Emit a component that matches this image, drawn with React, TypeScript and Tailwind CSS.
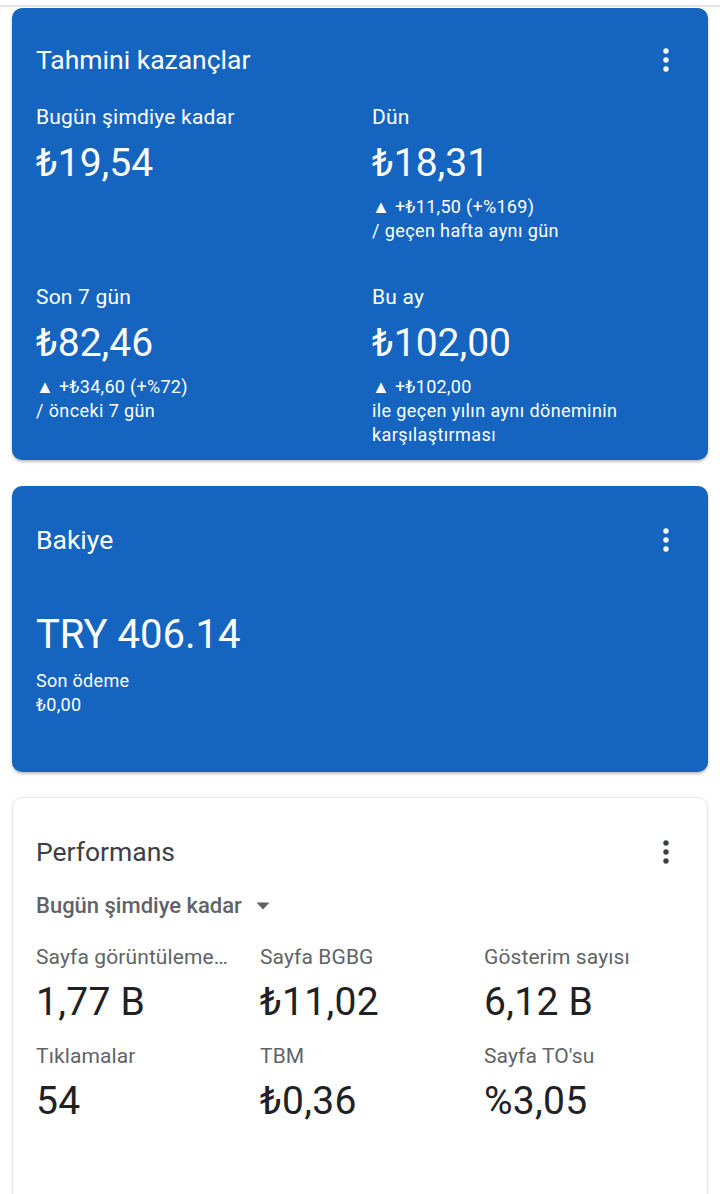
import React from "react";

const Dots = ({ color }: { color: string }) => (
  <svg width="6" height="24" viewBox="0 0 6 24" className="shrink-0">
    <circle cx="3" cy="3" r="2.7" fill={color} />
    <circle cx="3" cy="12" r="2.7" fill={color} />
    <circle cx="3" cy="21" r="2.7" fill={color} />
  </svg>
);

const font = { fontFamily: "Roboto, 'Noto Sans', sans-serif" };

function Stat({ label, value, delta, sub }: { label: string; value: string; delta?: string; sub?: string[] }) {
  return (
    <div className="flex flex-col">
      <div className="text-[21px] leading-[28px] tracking-[0.2px]">{label}</div>
      <div className="text-[39px] leading-[48px] mt-[8px]">{value}</div>
      {delta && <div className="text-[18px] leading-[24px] mt-[8px] tracking-[0.3px]">▲ {delta}</div>}
      {sub && sub.map((s) => (
        <div key={s} className="text-[18px] leading-[24.5px] tracking-[0.4px]">{s}</div>
      ))}
    </div>
  );
}

export default function App() {
  return (
    <div className="w-[720px] h-[1194px] overflow-hidden bg-white" style={font}>
      <div className="h-[5px] bg-white" />
      <div className="h-[2px] bg-[#e3e3e3]" />
      <div className="h-[1px] bg-white" />
      <div className="px-[12px] flex flex-col">
        {/* Card 1 */}
        <div className="bg-[#1565c0] rounded-[10px] text-white shadow-[0_2px_3px_rgba(0,0,0,0.25)] h-[452px] pl-[24px] pr-[39px] pt-[32px]">
          <div className="flex items-center justify-between h-[40px]">
            <div className="text-[26.5px] leading-[32px]">Tahmini kazançlar</div>
            <Dots color="#ffffff" />
          </div>
          <div className="grid grid-cols-[336px_1fr] mt-[23px]">
            <Stat label="Bugün şimdiye kadar" value="₺19,54" />
            <Stat label="Dün" value="₺18,31" delta="+₺11,50 (+%169)" sub={["/ geçen hafta aynı gün"]} />
          </div>
          <div className="grid grid-cols-[336px_1fr] mt-[39px]">
            <Stat label="Son 7 gün" value="₺82,46" delta="+₺34,60 (+%72)" sub={["/ önceki 7 gün"]} />
            <Stat label="Bu ay" value="₺102,00" delta="+₺102,00" sub={["ile geçen yılın aynı döneminin", "karşılaştırması"]} />
          </div>
        </div>

        {/* Card 2 */}
        <div className="mt-[26px] bg-[#1565c0] rounded-[10px] text-white shadow-[0_2px_3px_rgba(0,0,0,0.25)] h-[286px] pl-[24px] pr-[39px] pt-[34px]">
          <div className="flex items-center justify-between h-[40px]">
            <div className="text-[26.5px] leading-[32px]">Bakiye</div>
            <Dots color="#ffffff" />
          </div>
          <div className="text-[40px] leading-[48px] mt-[51px]">TRY 406.14</div>
          <div className="text-[18px] leading-[24px] mt-[10px] tracking-[0.3px]">Son ödeme</div>
          <div className="text-[18px] leading-[24px] tracking-[0.3px]">₺0,00</div>
        </div>

        {/* Card 3 */}
        <div className="mt-[25px] bg-white rounded-[10px] border border-[#e8e8e8] shadow-[0_1px_3px_rgba(0,0,0,0.10)] h-[420px] pl-[23px] pr-[38px] pt-[34px]">
          <div className="flex items-center justify-between h-[40px]">
            <div className="text-[26.5px] leading-[32px] text-[#3c4043]">Performans</div>
            <Dots color="#3c4043" />
          </div>
          <div className="flex items-center gap-[14px] mt-[20px] text-[#5f6368]">
            <span className="text-[22px] leading-[28px] font-medium">Bugün şimdiye kadar</span>
            <svg width="14" height="8" viewBox="0 0 14 8">
              <path d="M0.5 0.5h13L7 7.5z" fill="#5f6368" />
            </svg>
          </div>
          <div className="grid grid-cols-[224px_224px_224px] mt-[23px] gap-y-[16px]">
            {[
              ["Sayfa görüntüleme…", "1,77 B"],
              ["Sayfa BGBG", "₺11,02"],
              ["Gösterim sayısı", "6,12 B"],
              ["Tıklamalar", "54"],
              ["TBM", "₺0,36"],
              ["Sayfa TO'su", "%3,05"],
            ].map(([l, v]) => (
              <div key={l} className="flex flex-col min-w-0">
                <div className="text-[21px] leading-[28px] text-[#5f6368] whitespace-nowrap tracking-[0.1px]">{l}</div>
                <div className="text-[39px] leading-[48px] mt-[7px] text-[#202124] tracking-[0.3px]">{v}</div>
              </div>
            ))}
          </div>
        </div>
      </div>
    </div>
  );
}
